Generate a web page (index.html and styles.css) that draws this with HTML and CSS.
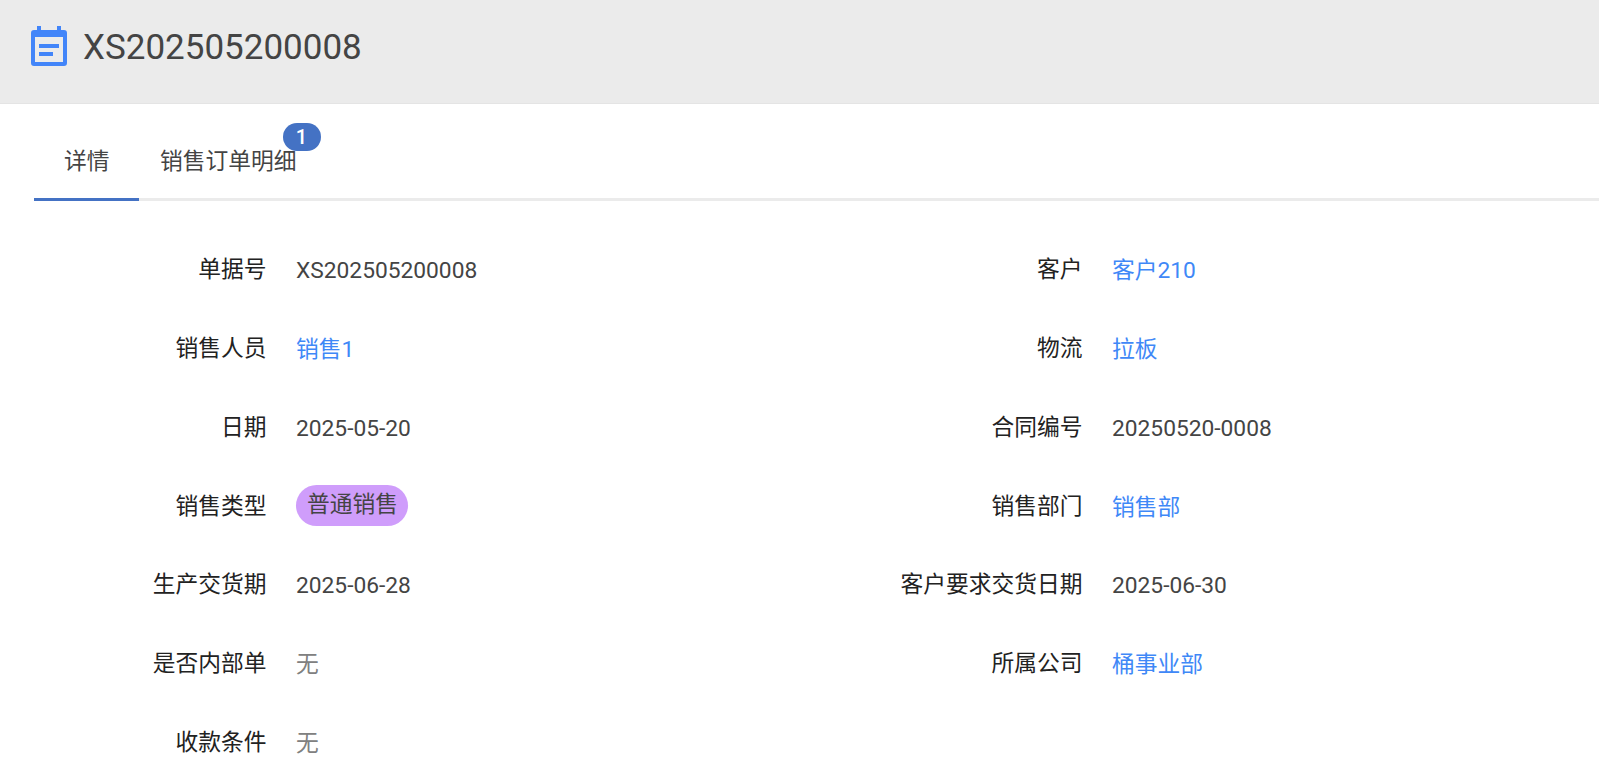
FILE: index.html
```html
<!DOCTYPE html>
<html lang="zh">
<head>
<meta charset="utf-8">
<title>XS202505200008</title>
<link rel="stylesheet" href="styles.css">
</head>
<body>
<header class="head">
  <svg class="head-icon" viewBox="0 0 36 40" width="36" height="40" aria-hidden="true">
    <path fill="#4285f9" fill-rule="evenodd" d="M6 0h4v4h16V0h4v4h3a3 3 0 0 1 3 3v30a3 3 0 0 1-3 3H3a3 3 0 0 1-3-3V7a3 3 0 0 1 3-3h3V0zM4 11v25h28V11H4zm4 7h20v4H8v-4zm0 8h14v4H8v-4z"/>
  </svg>
  <h1 class="head-title">XS202505200008</h1>
</header>
<nav class="tabs">
  <div class="tab tab-active">详情</div>
  <div class="tab tab-count">销售订单明细<span class="badge">1</span></div>
</nav>
<main class="form">
  <div class="field"><span class="label">单据号</span><span class="value">XS202505200008</span></div>
  <div class="field"><span class="label">客户</span><span class="value link">客户210</span></div>
  <div class="field"><span class="label">销售人员</span><span class="value link">销售1</span></div>
  <div class="field"><span class="label">物流</span><span class="value link">拉板</span></div>
  <div class="field"><span class="label">日期</span><span class="value">2025-05-20</span></div>
  <div class="field"><span class="label">合同编号</span><span class="value">20250520-0008</span></div>
  <div class="field"><span class="label">销售类型</span><span class="value"><span class="pill">普通销售</span></span></div>
  <div class="field"><span class="label">销售部门</span><span class="value link">销售部</span></div>
  <div class="field"><span class="label">生产交货期</span><span class="value">2025-06-28</span></div>
  <div class="field"><span class="label">客户要求交货日期</span><span class="value">2025-06-30</span></div>
  <div class="field"><span class="label">是否内部单</span><span class="value muted">无</span></div>
  <div class="field"><span class="label">所属公司</span><span class="value link">桶事业部</span></div>
  <div class="field"><span class="label">收款条件</span><span class="value muted">无</span></div>
</main>
</body>
</html>
```
FILE: styles.css
```css
* { box-sizing: border-box; }
html, body { margin: 0; height: 100%; overflow: hidden; }
body {
  background: #fff;
  color: #333;
  font-family: Roboto, "Noto Sans CJK SC", sans-serif;
  font-size: 22.75px;
}
.head {
  height: 104px;
  background: #ebebeb;
  border-bottom: 1px solid #e4e4e4;
  display: flex;
  align-items: center;
  padding: 0 0 12px 31px;
  gap: 16px;
}
.head-icon { flex: none; }
.head-title {
  margin: 4px 0 0;
  font-size: 35px;
  font-weight: 400;
  color: #444;
}
.tabs {
  display: flex;
  height: 97px;
  margin-left: 34px;
  border-bottom: 3px solid #ebebeb;
}
.tab {
  position: relative;
  height: 97px;
  padding: 42px 29px 0 30px;
  line-height: 32px;
  color: #444;
}
.tab-active { border-bottom: 3px solid #4472c4; }
.tab-count { padding-left: 21.5px; }
.badge {
  position: absolute;
  top: 19px;
  left: 144px;
  width: 38px;
  height: 28px;
  border-radius: 14px;
  background: #4472c4;
  color: #fff;
  font-size: 20px;
  font-weight: 500;
  line-height: 28px;
  text-align: center;
}
.form {
  display: grid;
  grid-template-columns: 816px 1fr;
  grid-auto-rows: 78.75px;
  padding-top: 31px;
}
.field { display: flex; align-items: center; line-height: 32px; }
.label {
  width: 266.5px;
  margin-top: -2px;
  text-align: right;
  color: #222;
  flex: none;
}
.value { margin-left: 29.5px; color: #444; }
.link { color: #3f88f7; }
.muted { color: #808080; }
.pill {
  display: block;
  width: 112px;
  height: 41px;
  margin-top: -4px;
  padding-left: 1px;
  line-height: 39px;
  text-align: center;
  border-radius: 21px;
  background: #cf9dfb;
}
```
